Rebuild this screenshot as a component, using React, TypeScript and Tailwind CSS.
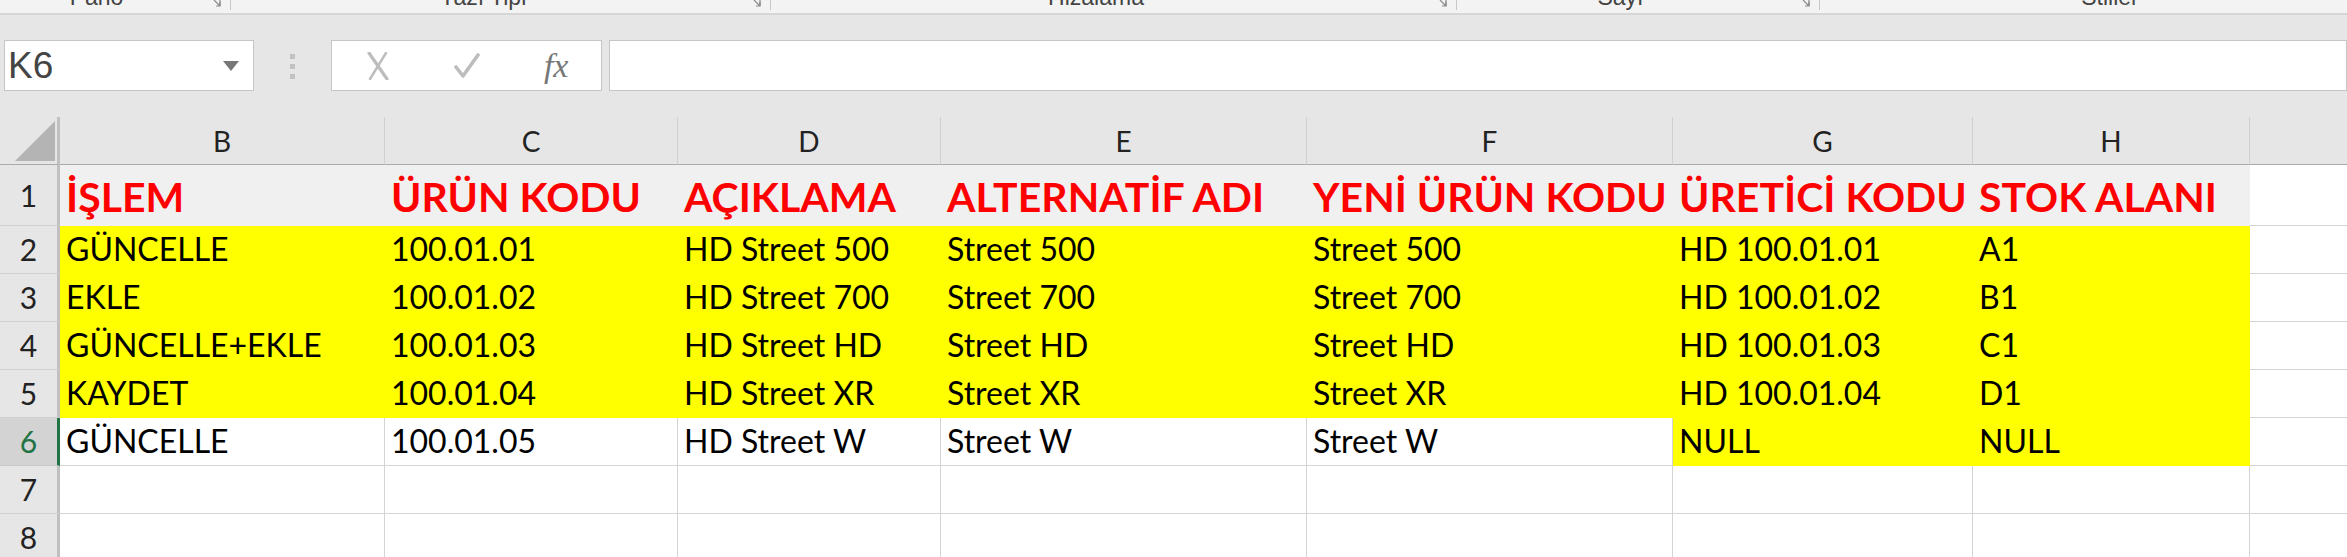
import React from "react";

const columns = [
  { key: "B", width: 325 },
  { key: "C", width: 293 },
  { key: "D", width: 263 },
  { key: "E", width: 366 },
  { key: "F", width: 366 },
  { key: "G", width: 300 },
  { key: "H", width: 277 },
  { key: "I", width: 200 },
];

const data: string[][] = [
  ["İŞLEM", "ÜRÜN KODU", "AÇIKLAMA", "ALTERNATİF ADI", "YENİ ÜRÜN KODU", "ÜRETİCİ KODU", "STOK ALANI", ""],
  ["GÜNCELLE", "100.01.01", "HD Street 500", "Street 500", "Street 500", "HD 100.01.01", "A1", ""],
  ["EKLE", "100.01.02", "HD Street 700", "Street 700", "Street 700", "HD 100.01.02", "B1", ""],
  ["GÜNCELLE+EKLE", "100.01.03", "HD Street HD", "Street HD", "Street HD", "HD 100.01.03", "C1", ""],
  ["KAYDET", "100.01.04", "HD Street XR", "Street XR", "Street XR", "HD 100.01.04", "D1", ""],
  ["GÜNCELLE", "100.01.05", "HD Street W", "Street W", "Street W", "NULL", "NULL", ""],
  ["", "", "", "", "", "", "", ""],
  ["", "", "", "", "", "", "", ""],
];

const ribbonGroups = [
  { label: "Pano", width: 233, launcher: true },
  { label: "Yazı Tipi", width: 540, launcher: true },
  { label: "Hizalama", width: 686, launcher: true },
  { label: "Sayı", width: 363, launcher: true },
  { label: "Stiller", width: 576, launcher: false },
];

function fillFor(r: number, c: number) {
  if (c === 7) return "bg-white border-[#d4d4d4]";
  if (r === 0) return "bg-[#f0f0f0] border-[#f0f0f0]";
  if (r >= 1 && r <= 4) return "bg-[#ffff00] border-[#ffff00]";
  if (r === 5 && c >= 5) return "bg-[#ffff00] border-[#ffff00]";
  return "bg-white border-[#d4d4d4]";
}

function Launcher() {
  return (
    <svg width="12" height="12" viewBox="0 0 12 12" className="mt-[-4px]">
      <path d="M1 1h9v9" fill="none" stroke="#8a8a8a" strokeWidth="1.2" />
      <path d="M4 4l6 6M6 10h4V6" fill="none" stroke="#8a8a8a" strokeWidth="1.2" />
    </svg>
  );
}

export default function App() {
  return (
    <div className="w-[2347px] h-[557px] overflow-hidden bg-white font-['Lato','Noto_Sans',sans-serif]">
      {/* ribbon group labels, cut off at the top */}
      <div className="flex h-[15px] overflow-hidden bg-[#f3f3f3] border-b-2 border-[#d6d6d6] font-['Liberation_Sans',sans-serif]">
        {ribbonGroups.map((g) => (
          <div key={g.label} className="flex shrink-0 items-start" style={{ width: g.width }}>
            <div className="flex-1 text-center text-[23px] leading-[23px] mt-[-14px] text-[#444]">{g.label}</div>
            {g.launcher && (
              <div className="flex w-[40px] items-start justify-end gap-[8px] pr-[2px]">
                <Launcher />
                <div className="w-px h-[10px] bg-[#c8c8c8]" />
              </div>
            )}
          </div>
        ))}
      </div>

      {/* formula bar */}
      <div className="flex h-[102px] items-start bg-[#e6e6e6] pt-[25px] font-['Liberation_Sans',sans-serif]">
        <div className="ml-[4px] flex h-[51px] w-[250px] shrink-0 items-center justify-between border border-[#c6c6c6] bg-white pl-[3px] pr-[14px]">
          <span className="text-[37px] leading-none text-[#444]">K6</span>
          <svg width="16" height="10" viewBox="0 0 16 10">
            <path d="M0 0h16L8 10z" fill="#777" />
          </svg>
        </div>
        <div className="flex w-[77px] shrink-0 flex-col items-center gap-[5px] pt-[14px]">
          <div className="h-[5px] w-[5px] bg-[#c2c2c2]" />
          <div className="h-[5px] w-[5px] bg-[#c2c2c2]" />
          <div className="h-[5px] w-[5px] bg-[#c2c2c2]" />
        </div>
        <div className="flex h-[51px] w-[271px] shrink-0 items-center border border-[#c6c6c6] bg-white">
          <div className="flex w-[90px] justify-center pl-[2px]">
            <svg width="22" height="28" viewBox="0 0 22 28">
              <path d="M2 1 L20 27" stroke="#bdbdbd" strokeWidth="3.2" strokeLinecap="round" />
              <path d="M19 1 L3 27" stroke="#bdbdbd" strokeWidth="2.4" strokeLinecap="round" />
            </svg>
          </div>
          <div className="flex w-[90px] justify-center">
            <svg width="26" height="26" viewBox="0 0 26 26">
              <path d="M2 14 L9 23 L24 2" fill="none" stroke="#bdbdbd" strokeWidth="3.6" strokeLinecap="round" strokeLinejoin="round" />
            </svg>
          </div>
          <div className="flex w-[90px] justify-center">
            <span className="font-['Liberation_Serif',serif] text-[34px] italic leading-none text-[#777]">fx</span>
          </div>
        </div>
        <div className="ml-[7px] h-[51px] flex-1 border border-[#c6c6c6] bg-white" />
      </div>

      {/* sheet */}
      <div className="grid grid-cols-[60px_325px_293px_263px_366px_366px_300px_277px_200px] grid-rows-[48px_61px_48px_48px_48px_48px_48px_48px_48px]">
        <div className="flex items-end justify-end border-r-[3px] border-b border-r-[#c0c0c0] border-b-[#ababab] bg-[#e6e6e6] pb-[3px] pr-[2px]">
          <svg width="40" height="40" viewBox="0 0 40 40">
            <path d="M40 0V40H0z" fill="#b4b4b4" />
          </svg>
        </div>
        {columns.map((col) => (
          <div
            key={col.key}
            className="flex items-center justify-center border-r border-b border-r-[#d0d0d0] border-b-[#ababab] bg-[#e6e6e6] text-[28px] text-[#222]"
          >
            {col.key}
          </div>
        ))}

        {data.map((row, r) => (
          <React.Fragment key={r}>
            {r === 5 ? (
              <div className="flex items-center justify-center border-b border-r-[3px] border-b-[#c8c8c8] border-r-[#217346] bg-[#d3d3d3] text-[30px] text-[#217346]">
                {r + 1}
              </div>
            ) : (
              <div className="flex items-center justify-center border-b border-r-[3px] border-b-[#d0d0d0] border-r-[#c0c0c0] bg-[#e6e6e6] text-[30px] text-[#222]">
                {r + 1}
              </div>
            )}
            {row.map((val, c) => (
              <div
                key={c}
                className={`flex items-end overflow-hidden whitespace-nowrap border-r border-b pl-[6px] ${fillFor(r, c)} ${
                  r === 0
                    ? "pb-[8px] text-[41px] font-bold leading-none text-[#ff0000]"
                    : "pb-[8px] text-[32px] leading-none text-black"
                }`}
              >
                {val}
              </div>
            ))}
          </React.Fragment>
        ))}
      </div>
    </div>
  );
}
